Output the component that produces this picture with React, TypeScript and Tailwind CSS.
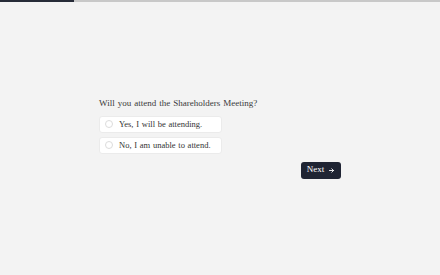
export default function App() {
  const options = ["Yes, I will be attending.", "No, I am unable to attend."]
  return (
    <div className="relative w-[440px] h-[275px] bg-[#f3f3f3] flex items-center justify-center" style={{ fontFamily: '"Liberation Serif", serif' }}>
      <div className="absolute top-0 left-0 right-0 h-[2px] bg-[#c8c8c8]">
        <div className="h-full w-[74px] bg-[#262b38]" />
      </div>
      <div className="w-[242px] flex flex-col">
        <p className="text-[9px] [word-spacing:0.8px] text-[#3a3a3a] leading-[12px] whitespace-nowrap">Will you attend the Shareholders Meeting?</p>
        <div className="mt-[7px] flex flex-col gap-[4px]">
          {options.map((o) => (
            <div key={o} className="w-[123px] h-[17px] bg-white rounded-[3px] border border-[#ebebeb] flex items-center pl-[5px] gap-[6px]">
              <span className="w-[8px] h-[8px] shrink-0 rounded-full border border-[#dcdcdc]" />
              <span className="text-[8.5px] [word-spacing:0.6px] text-[#333] leading-none whitespace-nowrap">{o}</span>
            </div>
          ))}
        </div>
        <div className="mt-[8px] flex justify-end">
          <button className="h-[17px] w-[40px] rounded-[3px] bg-[#1f2433] text-white text-[9px] flex items-center justify-center gap-[4px]">
            Next
            <svg width="7" height="7" viewBox="0 0 24 24" fill="none" stroke="white" strokeWidth="3" strokeLinecap="round" strokeLinejoin="round">
              <path d="M5 12h14M13 6l6 6-6 6" />
            </svg>
          </button>
        </div>
      </div>
    </div>
  )
}
